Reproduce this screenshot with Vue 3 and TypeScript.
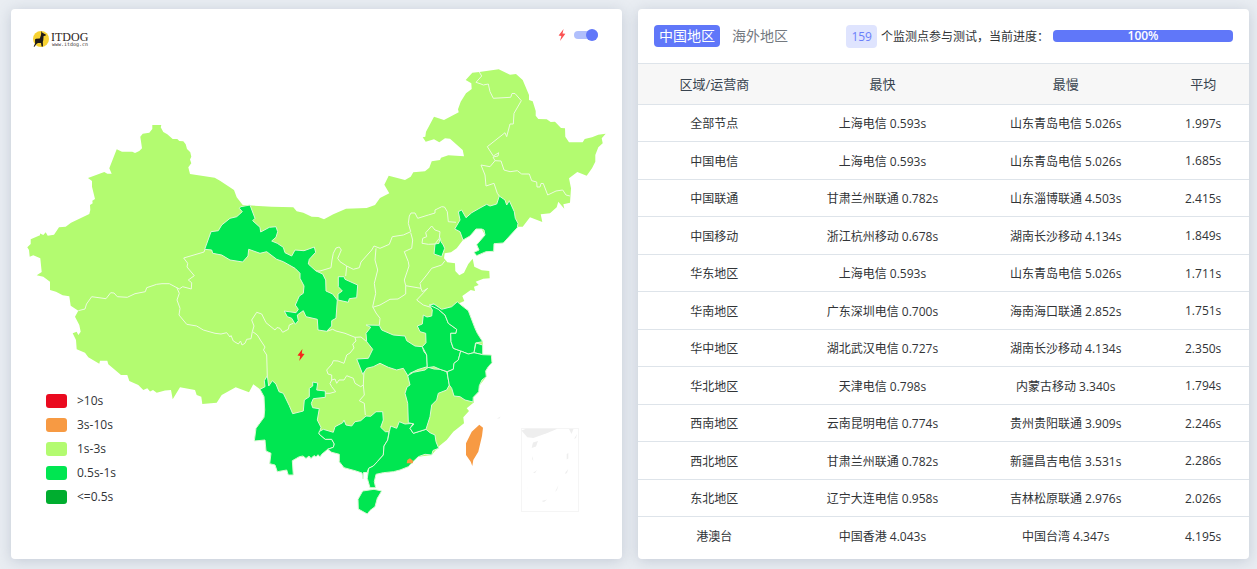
<script setup lang="ts">
import { ref } from 'vue'

interface Row {
  area: string
  fast: string
  slow: string
  avg: string
}

const tab = ref<'cn' | 'global'>('cn')
const showPoints = ref(true)
const progress = ref(100)

const legend = [
  { cls: 'red', label: '>10s' },
  { cls: 'orange', label: '3s-10s' },
  { cls: 'lime', label: '1s-3s' },
  { cls: 'green', label: '0.5s-1s' },
  { cls: 'deep', label: '<=0.5s' },
]

const rows: Row[] = [
  { area: '全部节点', fast: '上海电信 0.593s', slow: '山东青岛电信 5.026s', avg: '1.997s' },
  { area: '中国电信', fast: '上海电信 0.593s', slow: '山东青岛电信 5.026s', avg: '1.685s' },
  { area: '中国联通', fast: '甘肃兰州联通 0.782s', slow: '山东淄博联通 4.503s', avg: '2.415s' },
  { area: '中国移动', fast: '浙江杭州移动 0.678s', slow: '湖南长沙移动 4.134s', avg: '1.849s' },
  { area: '华东地区', fast: '上海电信 0.593s', slow: '山东青岛电信 5.026s', avg: '1.711s' },
  { area: '华南地区', fast: '广东深圳电信 0.700s', slow: '海南海口联通 2.852s', avg: '1.751s' },
  { area: '华中地区', fast: '湖北武汉电信 0.727s', slow: '湖南长沙移动 4.134s', avg: '2.350s' },
  { area: '华北地区', fast: '天津电信 0.798s', slow: '内蒙古移动 3.340s', avg: '1.794s' },
  { area: '西南地区', fast: '云南昆明电信 0.774s', slow: '贵州贵阳联通 3.909s', avg: '2.246s' },
  { area: '西北地区', fast: '甘肃兰州联通 0.782s', slow: '新疆昌吉电信 3.531s', avg: '2.286s' },
  { area: '东北地区', fast: '辽宁大连电信 0.958s', slow: '吉林松原联通 2.976s', avg: '2.026s' },
  { area: '港澳台', fast: '中国香港 4.043s', slow: '中国台湾 4.347s', avg: '4.195s' },
]

const mainland =
  'M27.3 247.3L30.7 244V239.3L40 235.3V233.5L43.3 235L45.7 232.3L47.7 235.7L54 234.7L59 227.3L65.7 226.7L71 222.7L89.3 214L90.3 210L90 205L92.7 203.3L92.3 200.7L95 199L92 186.7V181L88 178L104.3 172L107.3 173.7H111.7L109.3 168.3L116.7 149.3L122 151.7H132.3L135 153L139.3 151L142 148.3L140.3 136.7L142.7 133.7L149.3 132.7L152.3 129V125H161.3L160.7 127.3L163.3 132L167.3 134.3L172.7 139H177.3L179.3 141L183.3 141.3L185.7 144.3L187 149L190.3 152.3L191.3 156.7L190 159.5L191.3 163.3L188.3 167.3L190 174L214.7 177.7L220 180.7L234 190L236.7 197.3L242.7 205L271.7 206.7L293.3 207.3L296.7 211.3L303.3 212.7L311.7 216.7L318.3 217L324 219.3L333.3 214.3L346 208.7L366.7 208L375 205L380 198L389.3 193.3L384.3 184.7L388.7 175.7L405 180L410.7 176.7L413.3 172.3L425 171.3L429.3 167.7L431.7 161.3L440 160L441 157.7L448.3 155.3L464 156.3L462.7 150L450 138.7L445 138.3L439.3 142.3L434 139.3L425.7 141.7L422.7 137.3L425.3 136.7L426 131.7L434 116.7L444 120L458.7 112.3L458 109.3L460.7 101.7L466 93.3L471.7 89L471.3 83.3L465.7 80L472.3 72.7L479.3 72L498.7 69.3L510 74.7L516 74L522.7 80L529 95V100L532.7 101.3L535.7 111V115.7L538.3 119L546.7 119.3L550.7 122L555 121.7L561 128L565 128.3L565.3 136.7L569 142.3H582.7L584.7 139L592 137.3L598.3 134.7L605.7 133.7L601.7 138.3L602.7 143.3L598.3 147.3L595.3 155V161.7L592 168.3L586.7 175.7L577.3 172L569 178.3L571 188.3L570 202.7L563.3 204.3L564.3 208.7L558.3 201.7L556.7 207.3L550 213.3L540.7 214.3L542.3 222L530 217.3L522.7 226.7H517.3L503.3 243L494 243.7L493.7 251.3L486 251.7L476.7 255.7L474 252.3L479 250L476.7 244.7L485 235L481.7 229H476L470 236L463 240L456.7 248.3L451 252.3L444.7 253.3L444 258.3L447.3 262.3L455 263.3L455.3 271L459.3 275.3L464 272.7L468.3 264L472.7 258.7L474.3 266.7L481.7 270.3L489.3 271L489.7 278.3L483.3 278.7L475.7 281.7L478.7 285L474 286.7L475 291L470.7 290L462.3 296L464.3 301L459.3 303.3L468.3 310.7L475 328.3L477.3 333.3L482.7 341.7V354.7L491.3 355L492 362.7L488.3 366.7L485.7 371L486.3 376.7L479.3 385.7L478.7 391.7L473.3 397.3L474 402.3L466.7 408.3L469 411L463.3 417.3L464 423.3L453.3 431.7L446.7 440L439.3 446L437.3 448.3L431.7 455L418.3 456.7L408.3 466.7L400 470L393.3 471.7L383.3 472.7L376 474.3L374.3 481.7L375.7 487.7H370L367.3 478.3L368.3 472.7L355 470.7L344 467.7L339.3 461.7V454.3L331.7 452.3L327.7 449.3L321.7 454.3L316 455L310.7 457.3L299.3 456.7L292.3 460.7L293.3 475H288.3L286.7 470L277.3 471.7L275 465L269.7 463.7L271 453.3L266 451L265 440L254.3 441L256 428.3L264 417.3L264.7 410L264 396.7L260 389.3L253.3 384.3L249 392.3L235.7 387.3L221.7 395L216.7 402.7L202.3 404L201.3 396.7L196.7 395L195 390L180 387.3L172.7 399.3L171 390L165 390.5L156.7 392.7L153 390L150 391.5L147.3 388.3L143.3 390L138.3 385L129.3 381L127.3 375H121L108.3 364.3L107.3 360.7H100L99.3 363.7L88.3 357.3L85 352.7L76.7 349.3L76 340L72.7 333.3L76.7 331.7L78.3 335L80.7 331.7L79.3 325L75 316.7L78.3 310.7L70.7 305.7L69.3 296.3L62.7 295.3L56 291.7L50 290V281.7L43.3 276.7L36.7 275.3L41.7 272L40.3 258.3L33.3 255.3L29.7 256.7L29 250Z'

const greenRegions = [
  // Gansu
  'M240.7 206.7L250 205L255 218.3L252.7 220.7L260 227.3L260.7 232L269.3 227.3L276 226.7L277.7 231.7L276 237.3L271.7 241L277.3 243.3L283.3 247.3L285 252.7L291.7 256L295 250L304 250.7L314.3 247L315.7 252.3L309.3 259.3L308.3 264L316 271L322.7 274L325.7 280L326 291L332.7 294L337.3 300L336 318.3L331.7 320.7V326L326.7 331.3L318 330L317.3 319.3L306 316.7L303.3 310.7L297.3 315L298.3 320.7L295.3 324.3L291.7 318.3L287.3 316.7L284.3 311L296 312.7L298.3 309.3L295.3 305L299.3 296L303.3 293.3L304 286L300 278.3V273.3L295 268.3L283.3 261.7L276.7 259.3L266.7 251.7L260 253.3L248.7 249.3L248 256L242.7 262L230 260L221.7 255L212.7 253.3L211.7 250L204.7 249.3L211 231.7L218.3 230.7L221.7 225L230 218.3L236.7 216.7L242.3 211.7L239.3 208.3Z',
  'M338.3 276.7H344L345 279.3L357.7 285L356.7 297.7L349.3 298.7L348.3 302.3L338 300V294L342.3 291L338.3 286.7Z',
  // Yunnan
  'M260 389.3L265 386.7L264.3 380.7L267.3 375.7L268.7 386L272.3 380.7L276 384L279 391.7L283.3 393.3L289.3 405.7L292.7 413.7L303.3 411L304.3 400L309.3 396.7V388.3L312.7 386V382L317.7 383L316.7 390L325.3 391V397.3L313.3 398.7L311.3 403.3L312.7 407.7L319.3 408.7L317.3 420L321 427.3L319 434L325.3 439.3H331.7L334.3 444L333.3 447.3L327.7 449.3L321.7 454.3L320 457L318 454.7L316 457L314 455.5L311 458.5L309 456L306 458.5L303 456L299.3 456.7L292.3 460.7L293.3 475H288.3L286.7 470L277.3 471.7L275 465L269.7 463.7L271 453.3L266 451L265 440L254.3 441L256 428.3L264 417.3L264.7 410L264 396.7Z',
  // Guangxi
  'M319 431.7L323.3 429.3L333.3 432.3L335 426.7L342.7 422.7L344 420L346 425L351.7 426L355 421.7L360.7 420.7L366 416L370.7 416.3L376 411.7H382.7L383.3 420L380.7 427.3L385.3 431.7H389L387.7 440L384 446L383.3 455L377.3 461.7L373.3 466L368.7 468.3L367 472.5L363.5 472.5L363 479L362 473L355 470.7L344 467.7L339.3 461.7V454.3L331.7 452.3L327.7 449.3L333.3 447.3L334.3 444L331.7 439.3H325.3L319 434Z',
  // Guangdong
  'M389.3 431.7L390.7 426L396.7 428.3L399.3 421.7L405 424L413.3 423.3L410 428.3L413.3 433.3L426 429.3L430 432.7L435 435L436 441.7L438.7 448.3L433 450.5L431.7 455L425 454.3L418.3 456.7L413 461.7L408.3 466.7L400 470L393.3 471.7L383.3 472.7L376 474.3L374.3 481.7L375.7 487.7H370L367.3 478.3L368.7 468.3L373.3 466L377.3 461.7L383.3 455L384 446L387.7 440Z',
  // Jiangxi
  'M407.7 375.7L413.3 372.3L425 370L428.3 367.3L434 369L440 369.3L446.7 371.7L447.7 376L449.3 385L446.7 390L438.3 393.3L436.7 400L431.7 405L430 416.7L426 429.3L413.3 433.3L410 428.3L414 424L408.3 422.7L407.7 403.3L405 393.3L407 387L410 385Z',
  // Hubei
  'M366 325L379.3 325.3L381.7 330L393.3 335L405 336L406.7 340.7L415 346L422.3 346.7L424 351.7L426.7 355L427.3 366.7L418 369.5L410 373.3L408 376L403.3 368.3L396.7 370L388.3 367.3L380 363.3L373.3 366.7L366.7 368.3L362.7 374.3L356.7 359L368.3 358.3L372.7 349.3L366.7 341.7L366 333.3L370.7 327.3Z',
  // Anhui
  'M423.3 315L427 317L431.7 316L432.3 310L429.3 305L434 304L438.3 309.3L445 315L448.3 323.3L456.7 329.3L456 333.3H450.7L451 341.7L453.3 348.3L460.7 351L458.3 360L454 363.3L453.3 369.3L447.3 371.7L440 369.3L434 366.7L427.3 367.7L426.7 355L422.3 346.7L426 342.7L425.7 333.3L420 331.7L417.3 326L422.3 324Z',
  // Jiangsu
  'M429.3 305L434 304L441.7 309.3L451.7 306.7L457.3 301.7L461 305L468.3 310.7L475 328.3L477.3 333.3L482.7 341.7L475.5 343L474 352.7L468.3 354L460.7 351L453.3 348.3L451 341.7L450.7 333.3H456L456.7 329.3L448.3 323.3L445 315L438.3 309.3Z',
  // Shanghai
  'M476 343L482.7 345V354.7L474 352.7Z',
  // Zhejiang
  'M460.7 351L468.3 354L474 352.7L482.7 354.7L491.3 355L492 362.7L488.3 366.7L485.7 371L486.3 376.7L482 380L479.3 385.7L478.7 391.7L473.3 397.3L473 402L465 400L460 396.7L454 396L451.7 388.3L449.3 385L447.7 376L447.3 371.7L453.3 369.3L454 363.3L458.3 360Z',
  // Liaoning
  'M499.3 196L505 200L506.7 205L509.3 200.7L514.3 211.7L515.3 218.3L518 223.3L517.3 227.7L503.3 243L494 243.7L493.7 251.3L486 251.7L476.7 255.7L474 252.3L479 250L476.7 244.7L485 235L484 230L481.7 229H476L470 236L463 240L460 231.7L454.7 229L460 220L458.3 211.7L461.7 210L466 217.7L471.7 212.7L479 208.5L486.7 204.3L490 206L496.7 204Z',
  // Tianjin
  'M440 237.7L441 241.7L443.3 245L444.7 248.3L441.7 256.7L434 254L435 244L439 243.3Z',
  // Hainan
  'M362.7 491L374 489.3L381.7 491L377.3 498.3L375 506.7L370 510.5L367.3 514L358.3 509L358 499.3Z',
]

const orangeRegions = [
  'M479.3 424.7L483 427.7L482 436L478.3 451.7L473.3 460L472.3 466L470.7 461.7L466 455V443.3L471.7 431.7Z',
  'M407.3 460L410 458.3L413 460.7L412.7 463.3H406.7Z',
]

const borders = [
  'M205 249.3L204 252L183.7 258L187.7 263.3L187 267L194.3 275.7L188.3 280L191.7 282.7L191.3 289L182.7 286.7L179.3 289L169.3 283.7H162L156.7 284.3L146.7 287.7L145.3 291.7L135 293.7L127.3 297.3L117.3 296.7L114 293L110.7 292.7L106 298.7L91.7 296.7L86.5 304L85 309L78.3 310.7',
  'M176.7 287.3L179.3 293.3L177 300L180 308.3L179 315L186.7 324.3L196.7 326L203.3 330L215 333.3L221 334L226.7 332.7L230 337L231 335.5L233.3 341L238.3 344L240.5 341L242 345L245 343.3L246.7 339.3L251 338.7L252.3 331.7L254 326L251.7 320L256.7 312.3L261.7 314L266 322.7L275 330L277 327.5L280 328.3L282.7 332.3L288.3 329.3L289.3 325L293.3 323.3',
  'M252.7 331.7L257.3 335L261 341L265 347L263.5 350L266.7 355L267.3 376.7',
  'M326.7 331.3L332.7 329.3L336 331L345 333.3L355 337.3L361 337L366.7 341.7',
  'M355 337.3L356 341L352.7 344L354 348L350 353L346.7 355L344 363.3L338 361L333.3 360.7L332 364L326.7 370L328 374L331.7 375V380L335 379L336.7 383.3L339 380L344 380L346.7 375.7L353.3 378.3L355 383.3L360.7 386.7L363.3 385L364 371',
  'M325.3 393.3H330L335.7 391.7L331.7 386.7L330 383.5L331.7 380',
  'M363.3 385L364.3 395L359.3 400.7L364.3 403.3L365.3 415',
  'M316 271H320L331 267.7L332 260L333.3 253.3L336 248L339.3 247L341.3 250L337.7 258.3L340 261.7L346.7 266L345.7 276',
  'M346.7 266L353.3 269.3L359.3 267.7L361 262L371.7 250L374 246L380 248.3L389.3 244.3L392.3 236.7L403.3 235L410.7 231.7L408.3 223.3L409.3 216L411 213H415L417.7 218.3L428.3 215L435 213V210L441.7 206.7L444.5 207L447.3 211.7L448.3 221.7L456 222.3',
  'M376 248.3L375 260L377.7 270L374.3 283.3L375.7 293.3L372.7 306.7L376 313L380 318.3L379.3 325',
  'M410.7 232.7L412.7 240L411.7 248.3L404.3 251.7L408.3 261.7L409 266L404.3 280L405.7 285.7V294L398 299L390 299.3L380 305L372.7 307.3',
  'M405.7 285.7L421 288.3L420 283.3L426.7 275L431.7 268.3L441.7 265L445 260.7',
  'M421 288.3L422.3 291.7L427.7 288.3L416.7 300L423.3 305L430.7 307.3',
  'M431.7 226L435 230L440 231.7L439.3 238.3L435 244L428.3 244.3L422 243.3L422.7 238.3L426.7 236.7L425.7 232.7Z',
  'M479.3 72L481.7 76L476 82.3L481 84L483.3 85L488.3 84L490 91.7L493.3 98.3L510.7 97.3L512 93.5H515L521.3 100.7L514 113.3L513.3 124H510L506.7 136.7L505 132.7L487.3 146.7L493.3 156L498.7 152.7L498 156L493 157L495 160.7',
  'M495 160.7L501 161L504 170L510 171.7L517.3 170.7L521.7 174L529.3 174L531.7 180.7L536.7 182L537 187H540L541 183.5H543.3L547.7 195L556 191L562.7 190L566 195L570 196',
  'M495 160.7L490 166.7L481 165L485 175L486 186L494 183.3L497.3 193.3L499.3 196',
]

const islets = [
  'M521.5 430.5L526 428.7H557.5L546.7 433.3L533.3 438L527.3 437.3Z',
  'M569 429H573.5L571.5 434Z',
  'M533 442.5L538 441L536 446.5L531.7 448Z',
  'M566.7 454L568.3 453V458.5L566.7 459.5Z',
  'M565.7 472L568.3 469L567 473L565 474Z',
  'M555 492L558.5 485L557 490Z',
  'M533 473L537 470L535 473Z',
  'M527 486L528.5 491L527.5 488Z',
  'M541.5 501L547 499.5L544 502Z',
  'M574 439L577 434L576 438Z',
  'M532 456L533.5 461L532 459Z',
  'M497 418.5L500.5 416.5L499.5 418.5Z',
]
</script>

<template>
  <main class="page">
    <section class="card">
      <header class="map-head">
        <svg class="logo" viewBox="0 0 60 20" role="img" aria-label="ITDOG">
          <circle cx="9" cy="10" r="8" class="logo-disc" />
          <path
            class="logo-dog"
            d="M9.4 2L10.4 3.8L14 5.8L13.4 6.7L11.6 7L11.3 11L10.8 13L11 17.6H9.6L9 14L6 14L4.4 15L2.6 17.8L1.6 17.6L3.1 14.5L3 10.6L4 9.8L7.8 9.4L9 6Z"
          />
          <text x="19" y="12" class="logo-name">ITDOG</text>
          <text x="20" y="17" class="logo-url">www.itdog.cn</text>
        </svg>
        <label class="switch">
          <svg class="bolt" viewBox="0 0 8 12" aria-hidden="true">
            <path d="M5.6 0L0.6 6.6L3.4 7L2 12L7.4 4.8L4.5 4.6Z" />
          </svg>
          <input v-model="showPoints" type="checkbox" aria-label="显示节点" />
        </label>
      </header>

      <div class="map-body">
        <svg class="map" viewBox="11 60 611 499" role="img" aria-label="中国地图">
          <path :d="mainland" class="land" />
          <path v-for="(d, i) in borders" :key="'b' + i" :d="d" class="border" />
          <path v-for="(d, i) in greenRegions" :key="'g' + i" :d="d" class="fast" />
          <path v-for="(d, i) in orangeRegions" :key="'o' + i" :d="d" class="slow" />
          <rect x="521.5" y="428.5" width="57" height="83" class="inset" />
          <path v-for="(d, i) in islets" :key="'i' + i" :d="d" class="islet" />
          <path v-if="showPoints" class="point" d="M302.4 349L297.5 355.6L300.2 356L299.2 361L304.5 354L301.8 353.6Z" />
        </svg>
        <ul class="legend">
          <li v-for="item in legend" :key="item.label">
            <span class="swatch" :class="item.cls"></span>
            <span class="legend-text">{{ item.label }}</span>
          </li>
        </ul>
      </div>
    </section>

    <section class="card">
      <header class="table-head">
        <button type="button" class="tab" :class="{ active: tab === 'cn' }" @click="tab = 'cn'">中国地区</button>
        <button type="button" class="tab" :class="{ active: tab === 'global' }" @click="tab = 'global'">海外地区</button>
        <div class="status">
          <span class="count">159</span>
          <span class="status-text">个监测点参与测试，当前进度：</span>
          <div class="track" role="progressbar" aria-label="当前进度" :aria-valuenow="progress">
            <div class="bar" :style="{ width: progress + '%' }">{{ progress }}%</div>
          </div>
        </div>
      </header>
      <table>
        <colgroup>
          <col class="c-area" />
          <col class="c-wide" />
          <col class="c-wide" />
          <col class="c-avg" />
        </colgroup>
        <thead>
          <tr>
            <th scope="col">区域/运营商</th>
            <th scope="col">最快</th>
            <th scope="col">最慢</th>
            <th scope="col">平均</th>
          </tr>
        </thead>
        <tbody>
          <tr v-for="row in rows" :key="row.area">
            <td>{{ row.area }}</td>
            <td>{{ row.fast }}</td>
            <td>{{ row.slow }}</td>
            <td>{{ row.avg }}</td>
          </tr>
        </tbody>
      </table>
    </section>
  </main>
</template>

<style>
body {
  margin: 0;
  background: #e9edf2;
}
</style>

<style scoped>
.page {
  display: flex;
  align-items: stretch;
  gap: 16px;
  padding: 9px 8px 10px 11px;
  font-family: 'Open Sans', 'Noto Sans', 'Noto Sans CJK SC', sans-serif;
  font-size: 12px;
  color: #313437;
}
.card {
  flex: 1 1 0;
  min-width: 0;
  background: #fff;
  border-radius: 4px;
  box-shadow: 0 2px 14px rgba(100, 115, 145, 0.28);
}
.map-head {
  display: flex;
  align-items: flex-start;
  justify-content: space-between;
  height: 31px;
  padding: 20px 24px 0 21px;
}
.logo {
  width: 60px;
  height: 20px;
}
.logo-disc {
  fill: #f7d232;
}
.logo-dog {
  fill: #1f1a17;
}
.logo-name {
  font-family: 'Liberation Serif', serif;
  font-size: 12px;
  fill: #2d2522;
}
.logo-url {
  font-family: 'DejaVu Sans Mono', monospace;
  font-size: 5px;
  fill: #3a3330;
}
.switch {
  display: flex;
  align-items: center;
  gap: 8px;
  height: 12px;
}
.bolt {
  width: 8px;
  height: 12px;
  fill: #fb5252;
}
.switch input {
  appearance: none;
  position: relative;
  width: 24px;
  height: 8px;
  margin: 0;
  border-radius: 4px;
  background: #c9ccd4;
}
.switch input::after {
  content: '';
  position: absolute;
  top: -2px;
  left: 0;
  width: 12px;
  height: 12px;
  border-radius: 50%;
  background: #fff;
}
.switch input:checked {
  background: #b0bffc;
}
.switch input:checked::after {
  left: 12px;
  background: #6077f9;
}
.map-body {
  position: relative;
}
.map {
  display: block;
  width: 100%;
}
.land {
  fill: #b3fb70;
}
.border {
  fill: none;
  stroke: #ecfadf;
  stroke-linejoin: round;
}
.fast {
  fill: #00e651;
  stroke: #dcf8d6;
  stroke-width: 1;
  stroke-linejoin: round;
}
.slow {
  fill: #f79a43;
}
.inset {
  fill: none;
  stroke: #f5f5f5;
}
.islet {
  fill: #eee;
}
.point {
  fill: #f5271c;
}
.legend {
  position: absolute;
  left: 35px;
  bottom: 50px;
  margin: 0;
  padding: 0;
  list-style: none;
}
.legend li {
  display: flex;
  align-items: center;
  gap: 10px;
  height: 24px;
}
.legend-text {
  padding-bottom: 2px;
}
.swatch {
  width: 21px;
  height: 14px;
  border-radius: 3px;
}
.red {
  background: #ea0a1f;
}
.orange {
  background: #f79a43;
}
.lime {
  background: #b3fb70;
}
.green {
  background: #00e651;
}
.deep {
  background: #00ad2f;
}
.table-head {
  display: flex;
  align-items: center;
  gap: 7px;
  height: 54px;
  padding: 0 16px;
}
.tab {
  height: 22px;
  padding: 0 5px;
  border: 0;
  border-radius: 4px;
  background: none;
  font: inherit;
  font-size: 14px;
  line-height: 22px;
  color: #74797f;
}
.tab.active {
  background: #6077f9;
  color: #fff;
}
.status {
  display: flex;
  align-items: center;
  margin-left: auto;
}
.count {
  padding: 0 5px;
  border-radius: 4px;
  background: #dfe4fe;
  color: #6b7ffa;
  font-size: 12px;
  line-height: 23px;
}
.status-text {
  margin-left: 4px;
}
.track {
  width: 180px;
  height: 12px;
  margin-left: 4px;
  border-radius: 4px;
  background: #e9edf2;
}
.bar {
  height: 100%;
  border-radius: 4px;
  background: #6077f9;
  color: #fff;
  font-weight: 600;
  line-height: 12px;
  text-align: center;
}
table {
  width: 100%;
  margin-bottom: 4px;
  border-spacing: 0;
  table-layout: fixed;
}
.c-area {
  width: 25%;
}
.c-wide {
  width: 30%;
}
.c-avg {
  width: 15%;
}
th,
td {
  box-sizing: border-box;
  padding: 0;
  text-align: center;
  border-bottom: 1px solid #dee4ea;
}
th {
  height: 42px;
  padding-bottom: 2px;
  border-top: 1px solid #dee4ea;
  background: #f7f7f7;
  color: #38444f;
  font-size: 13px;
  font-weight: 400;
}
td {
  height: 37px;
}
tr:nth-child(even) td {
  height: 38px;
}
tbody tr:last-child td {
  border-bottom: 0;
}
</style>
